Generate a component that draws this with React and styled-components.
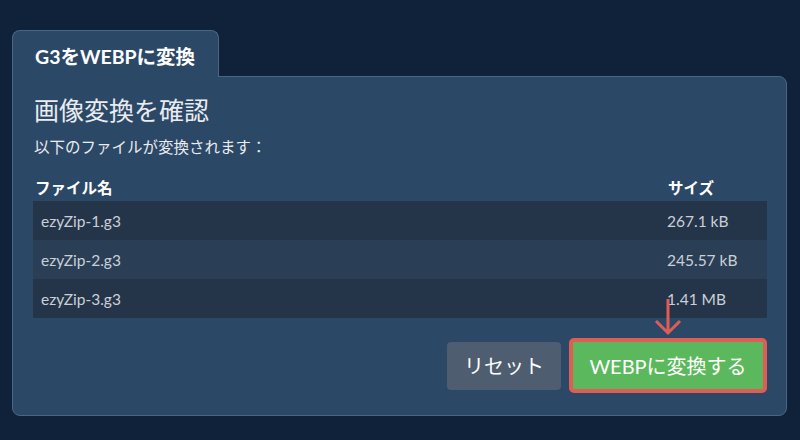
import styled, { createGlobalStyle } from 'styled-components';

const GlobalStyle = createGlobalStyle`
  html, body {
    margin: 0;
    padding: 0;
    background: #10213a;
  }
  body {
    font-family: Lato, "Noto Sans CJK JP", sans-serif;
    color: #eef1f5;
  }
`;

const Page = styled.div`
  width: 800px;
  height: 440px;
  box-sizing: border-box;
  padding: 30px 13px 0 12px;
`;

const Tab = styled.div`
  position: relative;
  z-index: 1;
  display: inline-block;
  box-sizing: border-box;
  width: 207px;
  height: 47px;
  margin-bottom: -1px;
  padding: 10px 0 0 22px;
  background: #2c4867;
  border: 1px solid #4b6584;
  border-bottom: none;
  border-radius: 8px 8px 0 0;
  font-size: 19.5px;
  font-weight: 700;
  color: #ffffff;
`;

const Panel = styled.div`
  box-sizing: border-box;
  height: 340px;
  padding: 18px 19px 20px 20px;
  background: #2c4867;
  border: 1px solid #4b6584;
  border-radius: 0 8px 8px 8px;
`;

const Title = styled.h2`
  margin: 0 0 0 1px;
  font-size: 25px;
  font-weight: 400;
  line-height: 30px;
  color: #e9ecf0;
`;

const Subtitle = styled.p`
  margin: 12px 0 0 1px;
  font-size: 15.5px;
  line-height: 20px;
  color: #e9ecf0;
`;

const Table = styled.div`
  margin-top: 21px;
  display: grid;
  grid-template-columns: 1fr 108px;
`;

const HeadCell = styled.div`
  padding: 0 0 3px ${(p) => p.$pad}px;
  font-size: 15.5px;
  font-weight: 700;
  line-height: 20px;
  color: #ffffff;
`;

const Cell = styled.div`
  height: 39px;
  display: flex;
  align-items: center;
  padding-left: 8px;
  background: ${(p) => (p.$odd ? '#2a3f56' : '#253549')};
  font-size: 15.5px;
  color: #cbd0d8;
`;

const Actions = styled.div`
  margin-top: 20px;
  display: flex;
  justify-content: flex-end;
  align-items: center;
  gap: 8px;
`;

const ResetButton = styled.button`
  width: 114px;
  height: 48px;
  border: none;
  border-radius: 4px;
  background: #4e5d6f;
  font-family: Lato, "Noto Sans CJK JP", sans-serif;
  font-size: 20px;
  color: #ffffff;
`;

const ConvertWrap = styled.div`
  position: relative;
`;

const ConvertButton = styled.button`
  display: block;
  width: 198px;
  height: 55px;
  border: 4px solid #e05d55;
  border-radius: 5px;
  background: #5cb85c;
  font-family: Lato, "Noto Sans CJK JP", sans-serif;
  font-size: 20px;
  color: #ffffff;
`;

const Arrow = styled.svg`
  position: absolute;
  left: 85px;
  top: -40px;
`;

const files = [
  { name: 'ezyZip-1.g3', size: '267.1 kB' },
  { name: 'ezyZip-2.g3', size: '245.57 kB' },
  { name: 'ezyZip-3.g3', size: '1.41 MB' },
];

export default function App() {
  return (
    <>
      <GlobalStyle />
      <Page>
        <Tab>G3をWEBPに変換</Tab>
        <Panel>
          <Title>画像変換を確認</Title>
          <Subtitle>以下のファイルが変換されます：</Subtitle>
          <Table>
            <HeadCell $pad={2}>ファイル名</HeadCell>
            <HeadCell $pad={9}>サイズ</HeadCell>
            {files.map((f, i) => [
              <Cell key={f.name} $odd={i % 2 === 1}>{f.name}</Cell>,
              <Cell key={f.size} $odd={i % 2 === 1}>{f.size}</Cell>,
            ])}
          </Table>
          <Actions>
            <ResetButton>リセット</ResetButton>
            <ConvertWrap>
              <Arrow width="28" height="38" viewBox="0 0 28 38">
                <path d="M14 1 V35 M2 23 L14 35 L26 23" fill="none" stroke="#e05d55" strokeWidth="3" />
              </Arrow>
              <ConvertButton>WEBPに変換する</ConvertButton>
            </ConvertWrap>
          </Actions>
        </Panel>
      </Page>
    </>
  );
}
